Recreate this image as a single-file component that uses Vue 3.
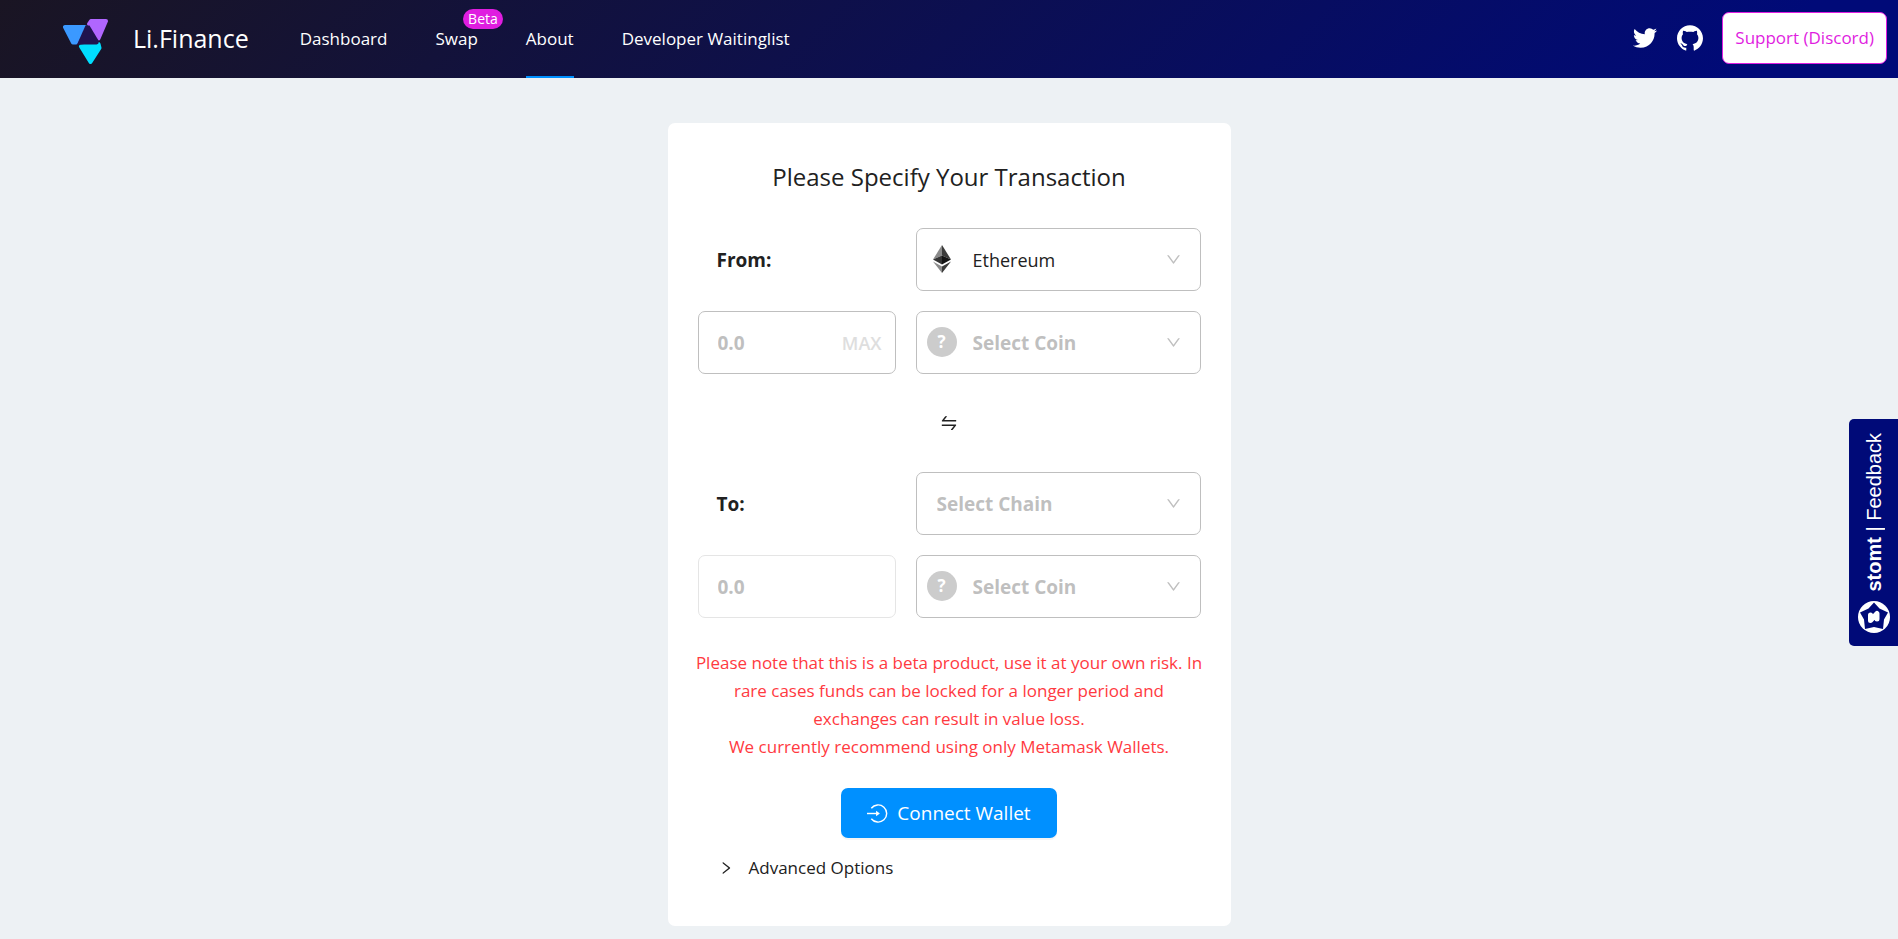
<template>
  <div class="page">
    <header class="header">
      <a class="brand" href="#">
        <svg class="logo" viewBox="0 0 45 45" aria-hidden="true">
          <g stroke-linejoin="round" stroke-width="4">
            <path d="M2 8H22L13 23.5H10Z" fill="#3b99ff" stroke="#3b99ff" />
            <path d="M28 2H43L35.5 19.5L26 5Z" fill="#b066ff" stroke="#b066ff" />
            <path d="M18 27.5L35.5 25L36.5 29L27.5 43Z" fill="#00deff" stroke="#00deff" />
          </g>
          <path d="M22.5 6.5H26.5L35.5 21.5Q36.5 25 33.5 25.5H14Z" fill="#20134f" />
        </svg>
        <span>Li.Finance</span>
      </a>
      <nav class="nav">
        <a v-for="link in links" :key="link.label" href="#" :class="{ active: link.active }">
          {{ link.label }}
          <span v-if="link.badge" class="badge">{{ link.badge }}</span>
        </a>
      </nav>
      <div class="header-right">
        <a class="social" href="#" aria-label="Twitter">
          <svg viewBox="64 64 896 896"><path :d="icons.twitter" /></svg>
        </a>
        <a class="social" href="#" aria-label="GitHub">
          <svg viewBox="64 64 896 896"><path :d="icons.github" /></svg>
        </a>
        <a class="support" href="#">Support (Discord)</a>
      </div>
    </header>

    <main class="card">
      <h1>Please Specify Your Transaction</h1>

      <div class="swap-grid">
        <label class="side-label" for="from-amount">From:</label>
        <div class="select-box">
          <svg class="eth" viewBox="0 0 18 28" aria-hidden="true">
            <path d="M9 0L0 14.5L9 10.5Z" fill="#8a8a8a" />
            <path d="M9 0L18 14.5L9 10.5Z" fill="#3c3c3b" />
            <path d="M0 14.5L9 10.5V19.5Z" fill="#343434" />
            <path d="M18 14.5L9 10.5V19.5Z" fill="#141414" />
            <path d="M0 16.5L9 21.5V28Z" fill="#8c8c8c" />
            <path d="M18 16.5L9 21.5V28Z" fill="#3c3c3b" />
          </svg>
          <select v-model="fromChain" class="with-icon" aria-label="From chain">
            <option>Ethereum</option>
          </select>
          <svg class="chevron" viewBox="0 0 1024 1024"><path :d="icons.down" /></svg>
        </div>

        <div class="amount">
          <input id="from-amount" v-model="fromAmount" type="text" placeholder="0.0" />
          <button type="button" class="max">MAX</button>
        </div>
        <div class="select-box">
          <span class="unknown">?</span>
          <select v-model="fromCoin" class="with-icon" :class="{ empty: !fromCoin }" aria-label="From coin">
            <option value="" disabled>Select Coin</option>
          </select>
          <svg class="chevron" viewBox="0 0 1024 1024"><path :d="icons.down" /></svg>
        </div>

        <div class="switch-row">
          <button type="button" aria-label="Switch direction">
            <svg viewBox="0 0 1024 1024"><path :d="icons.swap" /></svg>
          </button>
        </div>

        <label class="side-label" for="to-amount">To:</label>
        <div class="select-box">
          <select v-model="toChain" :class="{ empty: !toChain }" aria-label="To chain">
            <option value="" disabled>Select Chain</option>
          </select>
          <svg class="chevron" viewBox="0 0 1024 1024"><path :d="icons.down" /></svg>
        </div>

        <div class="amount readonly">
          <input id="to-amount" type="text" placeholder="0.0" disabled />
        </div>
        <div class="select-box">
          <span class="unknown">?</span>
          <select v-model="toCoin" class="with-icon" :class="{ empty: !toCoin }" aria-label="To coin">
            <option value="" disabled>Select Coin</option>
          </select>
          <svg class="chevron" viewBox="0 0 1024 1024"><path :d="icons.down" /></svg>
        </div>
      </div>

      <p class="warning">
        Please note that this is a beta product, use it at your own risk. In rare cases funds can be
        locked for a longer period and exchanges can result in value loss.<br />
        We currently recommend using only Metamask Wallets.
      </p>

      <button type="button" class="connect">
        <svg viewBox="0 0 22 22" aria-hidden="true">
          <path d="M4.5 5.5A9 9 0 1 1 4.5 16.5" fill="none" stroke="#fff" stroke-width="1.5" />
          <path d="M0 11H10" fill="none" stroke="#fff" stroke-width="1.5" />
          <path d="M9.5 8L13.5 11L9.5 14Z" fill="#fff" />
        </svg>
        Connect Wallet
      </button>

      <button type="button" class="advanced" :aria-expanded="showAdvanced" @click="showAdvanced = !showAdvanced">
        <svg viewBox="0 0 1024 1024"><path :d="icons.right" /></svg>
        Advanced Options
      </button>
    </main>

    <button type="button" class="feedback">
      <svg viewBox="0 0 32 32" aria-hidden="true">
        <circle cx="16" cy="16" r="16" fill="#fff" />
        <path d="M16 1.5L21.5 7.5L30 11.5L26 18.5L25 28L16 26L7 28L6 18.5L2 11.5L10.5 7.5Z" fill="#000a78" />
        <path d="M12.5 14V19.5L19 12.5V18" fill="none" stroke="#fff" stroke-width="5" stroke-linecap="round" stroke-linejoin="round" />
      </svg>
      <span><b>stomt</b> | Feedback</span>
    </button>
  </div>
</template>

<script setup>
import { ref } from 'vue';

const links = [
  { label: 'Dashboard' },
  { label: 'Swap', badge: 'Beta' },
  { label: 'About', active: true },
  { label: 'Developer Waitinglist' },
];

const fromChain = ref('Ethereum');
const fromCoin = ref('');
const toChain = ref('');
const toCoin = ref('');
const fromAmount = ref('');
const showAdvanced = ref(false);

const icons = {
  twitter: 'M928 254.3c-30.6 13.2-63.9 22.7-98.2 26.4a170.1 170.1 0 0075-94 336.64 336.64 0 01-108.2 41.2A170.1 170.1 0 00672 174c-94.5 0-170.5 76.6-170.5 170.6 0 13.2 1.6 26.4 4.2 39.1-141.5-7.4-267.7-75-351.6-178.5a169.32 169.32 0 00-23.2 86.1c0 59.2 30.1 111.4 76 142.1a172 172 0 01-77.1-21.7v2.1c0 82.9 58.6 151.6 136.7 167.4a180.6 180.6 0 01-44.9 5.8c-11.1 0-21.6-1.1-32.2-2.6C211 652 273.9 701.1 348.8 702.7c-58.6 45.9-132 72.9-211.7 72.9-14.3 0-27.5-.5-41.2-2.1C171.5 822 261.2 850 357.8 850 671.4 850 843 590.2 843 364.7c0-7.4 0-14.8-.5-22.2 33.2-24.3 62.3-54.4 85.5-88.2z',
  github: 'M511.6 76.3C264.3 76.2 64 276.4 64 523.5 64 718.9 189.3 885 363.8 946c23.5 5.9 19.9-10.8 19.9-22.2v-77.5c-135.7 15.9-141.2-73.9-150.3-88.9C215 726 171.5 718 184.5 703c30.9-15.9 62.4 4 98.9 57.9 26.4 39.1 77.9 32.5 104 26 5.7-23.5 17.9-44.5 34.7-60.8-140.6-25.2-199.2-111-199.2-213 0-49.5 16.3-95 48.3-131.7-20.4-60.5 1.9-112.3 4.9-120 58.1-5.2 118.5 41.6 123.2 45.3 33-8.9 70.7-13.6 112.9-13.6 42.4 0 80.2 4.9 113.5 13.9 11.3-8.6 67.3-48.8 121.3-43.9 2.9 7.7 24.7 58.3 5.5 118 32.4 36.8 48.9 82.7 48.9 132.3 0 102.2-59 188.1-200 212.9a127.5 127.5 0 0138.1 91v112.5c.8 9 0 17.9 15 17.9 177.1-59.7 304.6-227 304.6-424.1 0-247.2-200.4-447.3-447.5-447.3z',
  down: 'M884 256h-75c-5.1 0-9.9 2.5-12.9 6.6L512 654.2 227.9 262.6c-3-4.1-7.8-6.6-12.9-6.6h-75c-6.5 0-10.3 7.4-6.5 12.7l352.6 486.1c12.8 17.6 39 17.6 51.7 0l352.6-486.1c3.9-5.3.1-12.7-6.4-12.7z',
  right: 'M765.7 486.8L314.9 134.7A7.97 7.97 0 00302 141v77.3c0 4.9 2.3 9.6 6.1 12.6l360 281.1-360 281.1c-3.9 3-6.1 7.7-6.1 12.6V883c0 6.7 7.7 10.4 12.9 6.3l450.8-352.1a31.96 31.96 0 000-50.4z',
  swap: 'M847.9 592H152c-4.4 0-8 3.6-8 8v60c0 4.4 3.6 8 8 8h605.2L612.9 851c-4.1 5.2-.4 13 6.3 13h72.5c4.9 0 9.5-2.2 12.6-6.1l168.8-214.1c16.5-21 1.6-51.8-25.2-51.8zM872 356H266.8l144.3-183c4.1-5.2.4-13-6.3-13h-72.5c-4.9 0-9.5 2.2-12.6 6.1L150.9 380.2c-16.5 21-1.6 51.8 25.1 51.8h696c4.4 0 8-3.6 8-8v-60c0-4.4-3.6-8-8-8z',
};
</script>

<style>
body {
  background: #edf1f4;
}
</style>

<style scoped>
.page {
  min-height: 100vh;
  font-family: "Segoe UI", "Open Sans", sans-serif;
  font-size: 17px;
  line-height: 28px;
  color: #212121;
}

button,
input,
select {
  font: inherit;
  color: inherit;
}

button {
  padding: 0;
  border: none;
  background: none;
  cursor: pointer;
}

a {
  color: inherit;
  text-decoration: none;
}

svg {
  display: block;
  fill: currentColor;
}

/* header */
.header {
  display: flex;
  align-items: center;
  box-sizing: border-box;
  height: 78px;
  padding: 0 11px 2px 63px;
  color: #fff;
  background: linear-gradient(135deg, #1a1523, #000a78 92%);
}

.brand {
  display: flex;
  align-items: center;
  gap: 25px;
  font-size: 25px;
}

.logo {
  width: 45px;
  height: 45px;
  margin-top: 7px;
}

.nav {
  display: flex;
  align-self: stretch;
  gap: 48px;
  margin: 0 0 -2px 51px;
}

.nav a {
  position: relative;
  display: flex;
  align-items: center;
  border-top: 2px solid transparent;
  border-bottom: 2px solid transparent;
}

.nav a.active {
  border-bottom-color: #0090ff;
}

.badge {
  position: absolute;
  top: 7px;
  right: -25px;
  padding: 0 5px;
  border-radius: 10px;
  font-size: 14px;
  line-height: 20px;
  background: #df1de0;
}

.header-right {
  display: flex;
  align-items: center;
  gap: 19px;
  margin-left: auto;
}

.social svg {
  width: 26px;
  height: 26px;
}

.support {
  padding: 11px 12px;
  border: 1px solid #df1de0;
  border-radius: 7px;
  color: #df1de0;
  background: #fff;
}

/* form card */
.card {
  box-sizing: border-box;
  max-width: 563px;
  margin: 45px auto 13px;
  padding: 36px 30px 44px;
  border-radius: 7px;
  background: #fff;
}

h1 {
  margin: 0 0 33px;
  font-size: 24px;
  font-weight: 500;
  line-height: 36px;
  text-align: center;
}

.swap-grid {
  display: grid;
  grid-template-columns: minmax(0, 198fr) minmax(0, 285fr);
  grid-template-rows: 63px 63px 58px 63px 63px;
  gap: 20px;
}

.side-label {
  display: flex;
  align-items: center;
  padding-left: 19px;
  font-size: 19px;
  font-weight: 700;
}

.select-box {
  position: relative;
}

.select-box select {
  width: 100%;
  height: 100%;
  padding: 0 40px 0 20px;
  border: 1px solid #bfbfbf;
  border-radius: 7px;
  appearance: none;
  background: #fff;
  font-size: 18px;
}

.select-box select.with-icon {
  padding-left: 56px;
}

.select-box select.empty {
  font-size: 19px;
  font-weight: 700;
  color: #bfbfbf;
}

.eth {
  position: absolute;
  top: 17px;
  left: 17px;
  width: 18px;
  height: 28px;
}

.unknown {
  position: absolute;
  top: 16px;
  left: 11px;
  width: 30px;
  border-radius: 50%;
  font-weight: 700;
  line-height: 30px;
  text-align: center;
  color: #fff;
  background: #ccc;
}

.chevron {
  position: absolute;
  top: 23px;
  right: 19px;
  width: 17px;
  height: 17px;
  color: #bfbfbf;
  pointer-events: none;
}

.amount {
  display: flex;
  align-items: center;
  padding: 0 13px 0 19px;
  border: 1px solid #bfbfbf;
  border-radius: 7px;
}

.amount.readonly {
  border-color: #e5e5e5;
}

.amount input {
  flex: 1;
  min-width: 0;
  padding: 0;
  border: none;
  outline: none;
  background: none;
  font-size: 19px;
  font-weight: 700;
}

.amount input::placeholder {
  color: #bfbfbf;
}

.max {
  font-size: 18px;
  font-weight: 600;
  color: #dedede;
}

.switch-row {
  display: flex;
  grid-column: 1 / -1;
  align-items: center;
  justify-content: center;
}

.switch-row svg {
  width: 20px;
  height: 20px;
}

.warning {
  margin: 31px -3px 27px;
  text-align: center;
  color: #ff3a3f;
}

.connect {
  display: flex;
  align-items: center;
  gap: 9px;
  height: 50px;
  margin: 0 auto 16px;
  padding: 0 26px;
  border-radius: 7px;
  font-size: 19px;
  color: #fff;
  background: #0090ff;
  box-shadow: 0 2px 0 rgba(0, 0, 0, 0.04);
}

.connect svg {
  width: 21px;
  height: 21px;
}

.advanced {
  display: flex;
  align-items: center;
  gap: 15px;
  margin-left: 20px;
}

.advanced svg {
  width: 16px;
  height: 16px;
}

/* feedback tab on the right edge */
.feedback {
  position: fixed;
  right: 0;
  bottom: 293px;
  display: flex;
  flex-direction: column-reverse;
  align-items: center;
  justify-content: space-between;
  box-sizing: border-box;
  width: 49px;
  height: 227px;
  padding: 14px 0 13px;
  border-radius: 5px 0 0 5px;
  font-family: "Liberation Sans", Arial, sans-serif;
  font-size: 20px;
  color: #fff;
  background: #000a78;
}

.feedback svg {
  width: 32px;
  height: 32px;
}

.feedback span {
  writing-mode: vertical-rl;
  transform: rotate(180deg);
}
</style>
